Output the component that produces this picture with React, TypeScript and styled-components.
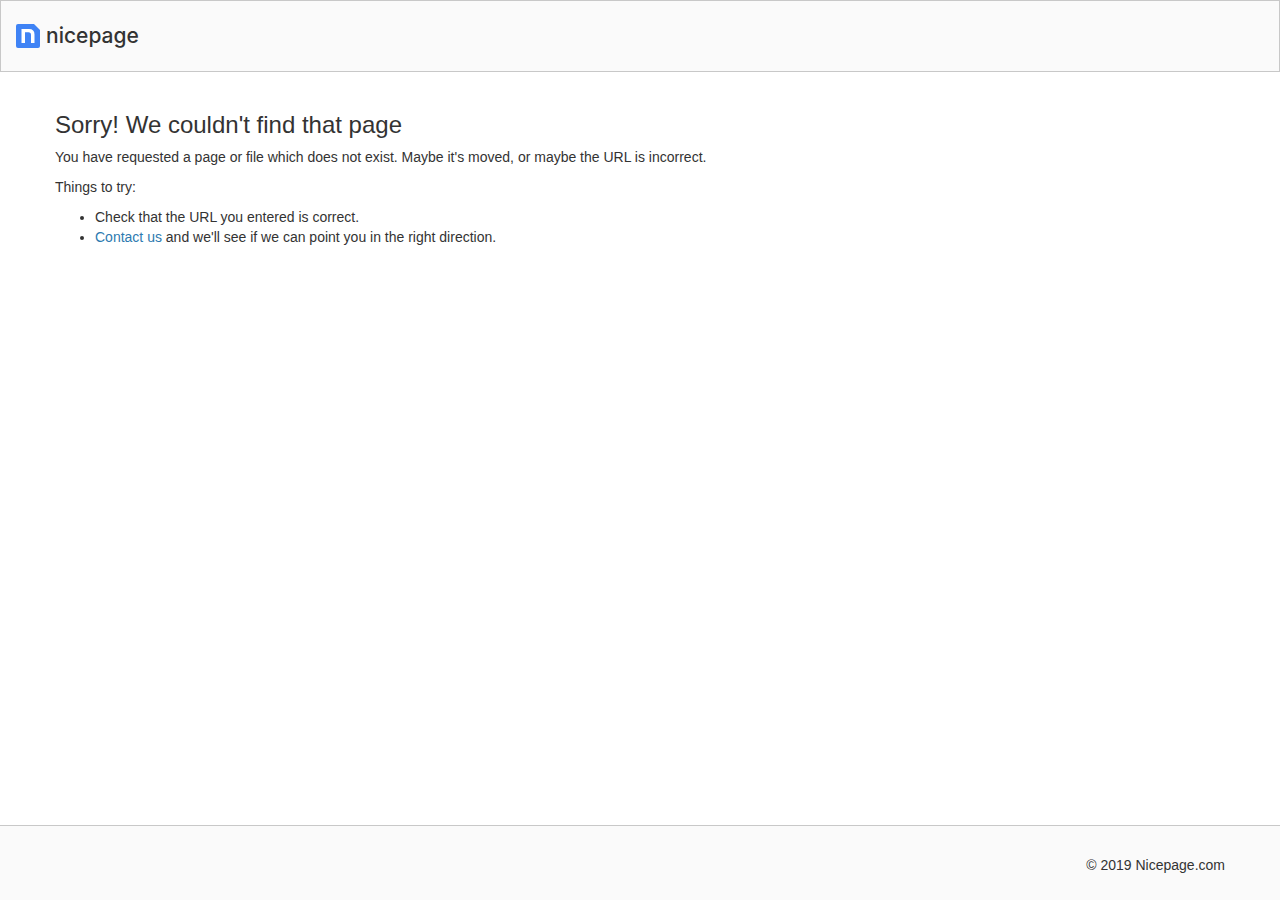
import React from "react";
import styled, { createGlobalStyle } from "styled-components";

const GlobalStyle = createGlobalStyle`
  *, *::before, *::after { box-sizing: border-box; }
  body {
    margin: 0;
    background: #fff;
    color: #333;
    font-family: "Helvetica Neue", "Liberation Sans", Arial, sans-serif;
    font-size: 14px;
    line-height: 20px;
  }
`;

const Page = styled.div`
  display: flex;
  flex-direction: column;
  min-height: 100vh;
`;

const Header = styled.header`
  display: flex;
  align-items: center;
  height: 72px;
  padding: 0 15px;
  background: #fafafa;
  border: 1px solid #c8c8c8;
`;

const Brand = styled.a`
  display: flex;
  align-items: center;
  gap: 6px;
  color: #333;
  text-decoration: none;
`;

const BrandName = styled.span`
  font-family: Inter, sans-serif;
  font-size: 21px;
  font-weight: 500;
  line-height: 24px;
`;

const Container = styled.div`
  width: 100%;
  max-width: 1200px;
  margin: 0 auto;
  padding: 0 15px;
`;

const Main = styled.main`
  flex: 1;
  padding: 41px 0;
`;

const Title = styled.h1`
  margin: 0 0 10px;
  font-size: 24px;
  font-weight: 400;
  line-height: 24px;
`;

const Text = styled.p`
  margin: 0 0 10px;
`;

const Tips = styled.ul`
  margin: 0;
  padding-left: 40px;
`;

const Link = styled.a`
  color: #2d7ab0;
  text-decoration: none;
`;

const Footer = styled.footer`
  padding: 29px 0 25px;
  background: #fafafa;
  border-top: 1px solid #c8c8c8;
  text-align: right;
`;

const LogoMark = () => (
  <svg width="24" height="24" viewBox="0 0 24 24" aria-hidden="true">
    <path d="M2 0H18L24 6V22a2 2 0 0 1-2 2H2a2 2 0 0 1-2-2V2a2 2 0 0 1 2-2Z" fill="#3f83f5" />
    <path d="M5.5 5H13Q18.5 5 18.5 10.5V19H15V11Q15 8.3 12.5 8.3H9V19H5.5Z" fill="#fff" />
  </svg>
);

export default function App() {
  return (
    <Page>
      <GlobalStyle />
      <Header>
        <Brand href="/">
          <LogoMark />
          <BrandName>nicepage</BrandName>
        </Brand>
      </Header>
      <Main>
        <Container>
          <Title>Sorry! We couldn't find that page</Title>
          <Text>
            You have requested a page or file which does not exist. Maybe it's moved, or maybe the
            URL is incorrect.
          </Text>
          <Text>Things to try:</Text>
          <Tips>
            <li>Check that the URL you entered is correct.</li>
            <li>
              <Link href="/contact">Contact us</Link> and we'll see if we can point you in the right
              direction.
            </li>
          </Tips>
        </Container>
      </Main>
      <Footer>
        <Container>© 2019 Nicepage.com</Container>
      </Footer>
    </Page>
  );
}
